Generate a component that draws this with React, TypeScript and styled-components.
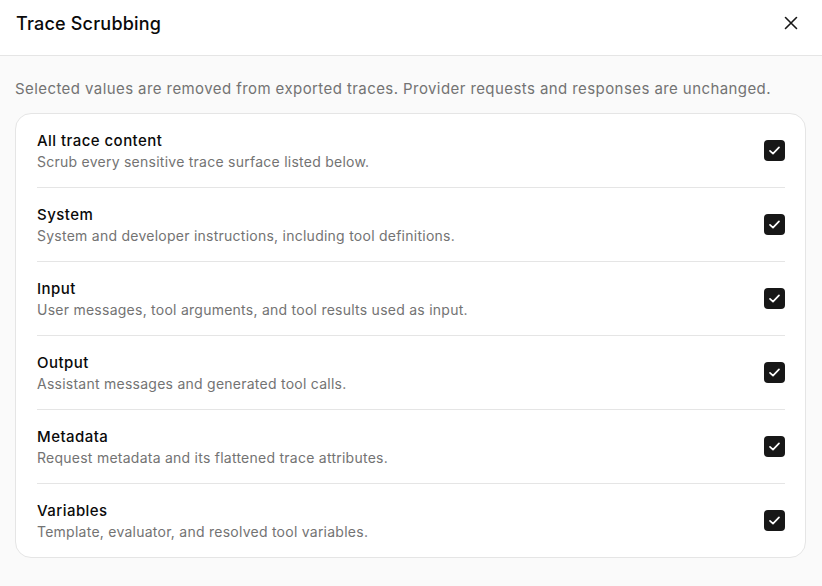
import React from "react";
import styled, { createGlobalStyle } from "styled-components";

const Global = createGlobalStyle`
  * { box-sizing: border-box; }
  html, body { margin: 0; padding: 0; background: #fafafa; }
  body { font-family: Inter, "Noto Sans", sans-serif; -webkit-font-smoothing: antialiased; }
`;

const Dialog = styled.div`
  width: 822px;
  height: 586px;
  display: flex;
  flex-direction: column;
  background: #fafafa;
`;

const Header = styled.header`
  height: 56px;
  display: flex;
  align-items: center;
  justify-content: space-between;
  padding: 0 22px 0 16px;
  background: #ffffff;
  border-bottom: 1px solid #e5e5e5;
`;

const Title = styled.h1`
  margin: 0;
  font-size: 18px;
  font-weight: 500;
  color: #0a0a0a;
  letter-spacing: 0.2px;
  padding-bottom: 8px;
`;

const CloseButton = styled.button`
  border: none;
  background: transparent;
  padding: 0;
  width: 18px;
  height: 18px;
  display: flex;
  align-items: center;
  justify-content: center;
  color: #171717;
  margin-bottom: 9px;
  cursor: pointer;
`;

const Body = styled.div`
  padding: 22px 16px 0 15px;
  display: flex;
  flex-direction: column;
  gap: 13px;
`;

const Lead = styled.p`
  margin: 0;
  font-size: 15px;
  line-height: 22px;
  letter-spacing: 0.42px;
  color: #737373;
`;

const Card = styled.div`
  background: #ffffff;
  border: 1px solid #e5e5e5;
  border-radius: 16px;
  padding: 0 20px 0 21px;
`;

const Row = styled.label`
  display: flex;
  align-items: center;
  justify-content: space-between;
  padding: 16px 0 15px;
  border-bottom: 1px solid #e5e5e5;
  &:last-child { border-bottom: none; }
`;

const Texts = styled.div`
  display: flex;
  flex-direction: column;
`;

const RowTitle = styled.span`
  font-size: 15px;
  line-height: 22px;
  font-weight: 500;
  letter-spacing: 0.45px;
  color: #0a0a0a;
`;

const RowDesc = styled.span`
  font-size: 14px;
  line-height: 20px;
  letter-spacing: 0.25px;
  color: #737373;
`;

const Check = styled.span`
  width: 21px;
  height: 21px;
  border-radius: 4px;
  background: #171717;
  display: flex;
  align-items: center;
  justify-content: center;
  margin-top: -1px;
`;

const items = [
  ["All trace content", "Scrub every sensitive trace surface listed below."],
  ["System", "System and developer instructions, including tool definitions."],
  ["Input", "User messages, tool arguments, and tool results used as input."],
  ["Output", "Assistant messages and generated tool calls."],
  ["Metadata", "Request metadata and its flattened trace attributes."],
  ["Variables", "Template, evaluator, and resolved tool variables."],
];

export default function App() {
  return (
    <>
      <Global />
      <Dialog>
        <Header>
          <Title>Trace Scrubbing</Title>
          <CloseButton aria-label="Close">
            <svg width="16" height="16" viewBox="0 0 16 16" fill="none" stroke="currentColor" strokeWidth="1.6" strokeLinecap="round">
              <path d="M2.5 2.5l11 11M13.5 2.5l-11 11" />
            </svg>
          </CloseButton>
        </Header>
        <Body>
          <Lead>Selected values are removed from exported traces. Provider requests and responses are unchanged.</Lead>
          <Card>
            {items.map(([t, d]) => (
              <Row key={t}>
                <Texts>
                  <RowTitle>{t}</RowTitle>
                  <RowDesc>{d}</RowDesc>
                </Texts>
                <Check>
                  <svg width="15" height="15" viewBox="0 0 15 15" fill="none" stroke="#ffffff" strokeWidth="1.7" strokeLinecap="round" strokeLinejoin="round">
                    <path d="M3 7.8l3 2.9 6-6.3" />
                  </svg>
                </Check>
              </Row>
            ))}
          </Card>
        </Body>
      </Dialog>
    </>
  );
}
